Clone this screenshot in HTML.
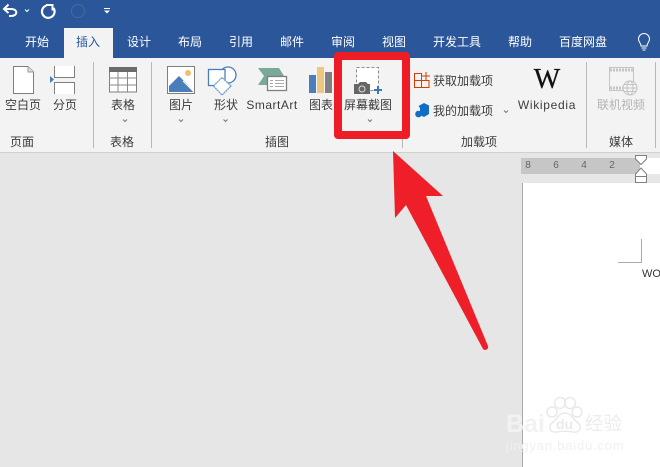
<!DOCTYPE html>
<html><head><meta charset="utf-8">
<style>
html,body{margin:0;padding:0}
body{width:660px;height:467px;overflow:hidden;position:relative;background:#e6e6e6;font-family:"Liberation Sans","Noto Sans CJK SC",sans-serif;font-size:12px;color:#3c3c3c}
.a{position:absolute}
.t{position:absolute;white-space:nowrap;line-height:16px;height:16px;transform:translateX(-50%)}
.tab{color:#fff;top:34px}
.sep{position:absolute;width:1px;background:#b8b8b8;top:62px;height:86px}
.c{position:absolute;color:#666;font-size:10px;line-height:10px;transform:translateX(-50%)}
svg{position:absolute;overflow:visible}
</style></head><body>
<div class="a" style="left:0;top:0;width:660px;height:58px;background:#2b579a"></div>
<div class="a" style="left:64px;top:28px;width:49px;height:30px;background:#f3f3f3"></div>
<div class="a" style="left:0;top:58px;width:660px;height:94px;background:#f3f3f3"></div>
<div class="a" style="left:0;top:152px;width:660px;height:1px;background:#d0d0d0"></div>

<!-- QAT -->
<svg style="left:0;top:0" width="120" height="24" fill="none">
<path d="M4 9 H11.500 C18 9 18 16 11 16 H9" stroke="#fff" stroke-width="2"/><path d="M8.500 4.500 L4 9 L8.500 13" stroke="#fff" stroke-width="2"/>
<path d="M25 9.500 l2 2 l2 -2" stroke="#fff" stroke-width="1"/>
<path d="M46.500 5.500 A6.300 6.300 0 1 0 53.500 8" stroke="#fff" stroke-width="2.200"/><path d="M46 5 H52.500 V10.500" stroke="#fff" stroke-width="2"/>
<circle cx="78" cy="11" r="6.500" stroke="#47699f" stroke-width="1"/>
<path d="M104 8.500 h6" stroke="#fff" stroke-width="1"/><path d="M104 10.500 h6 l-3 3 z" fill="#fff"/>
</svg>

<!-- Tabs -->
<div class="t tab" style="left:37px">开始</div>
<div class="t" style="left:88px;top:34px;color:#2b579a">插入</div>
<div class="t tab" style="left:139px">设计</div>
<div class="t tab" style="left:190px">布局</div>
<div class="t tab" style="left:241px">引用</div>
<div class="t tab" style="left:292px">邮件</div>
<div class="t tab" style="left:343px">审阅</div>
<div class="t tab" style="left:394px">视图</div>
<div class="t tab" style="left:457px">开发工具</div>
<div class="t tab" style="left:520px">帮助</div>
<div class="t tab" style="left:583px">百度网盘</div>
<svg style="left:636px;top:33px" width="16" height="20" fill="none" stroke="#fff" stroke-width="1"><path d="M5 13 C5 10 2.500 9 2.500 6 A5.500 5.500 0 0 1 13.500 6 C13.500 9 11 10 11 13 Z"/><path d="M5.500 15 h5 M6.500 17 h3"/></svg>

<!-- Separators -->
<div class="sep" style="left:93px"></div>
<div class="sep" style="left:151px"></div>
<div class="sep" style="left:402px"></div>
<div class="sep" style="left:586px"></div>
<div class="sep" style="left:655px"></div>

<!-- 空白页 -->
<svg style="left:0;top:60px" width="150" height="40" fill="none">
<path d="M13.500 6.500 H28 L33.500 12 V33.500 H13.500 Z" fill="#fff" stroke="#7f7f7f"/><path d="M28 6.500 V12 H33.500" stroke="#9a9a9a" fill="#e0e0e0"/>
<rect x="54" y="6" width="21" height="11" fill="#fff"/><rect x="54" y="22" width="21" height="12" fill="#fff"/>
<path d="M54.500 6 V17.500 H74.500 V6 M54.500 34 V22.500 H74.500 V34" stroke="#7f7f7f"/>
<path d="M50 16 L54 19.500 L50 23 Z" fill="#4a7ebb"/>
<rect x="109.500" y="7.500" width="27" height="24.500" fill="#fff" stroke="#7f7f7f"/><rect x="109" y="7" width="28" height="5" fill="#6b6b6b"/>
<path d="M109 18 H137 M109 25 H137 M118 12 V32 M127.500 12 V32" stroke="#8a8a8a"/>
</svg>
<div class="t" style="left:23px;top:97px">空白页</div>
<div class="t" style="left:65px;top:97px">分页</div>
<div class="t" style="left:123px;top:97px">表格</div>
<div class="t" style="left:22px;top:134px">页面</div>
<div class="t" style="left:122px;top:134px">表格</div>
<svg style="left:0;top:119px" width="400" height="6" fill="none" stroke="#777"><path d="M123 .5 l2 2 l2 -2 M179 .5 l2 2 l2 -2 M223.500 .5 l2 2 l2 -2 M368 .5 l2 2 l2 -2"/></svg>

<!-- 图片, 形状, SmartArt, 图表 -->
<svg style="left:0;top:0" width="340" height="100" fill="none">
<rect x="167.500" y="66.500" width="27" height="27" fill="#fff" stroke="#7f7f7f"/>
<circle cx="188" cy="73" r="3" fill="#eebf6f"/>
<path d="M169 92 V86 L179 76 L189 86 L193 92 Z" fill="#4a7ebb"/><path d="M183 81 L193 91" stroke="#fff"/>
<circle cx="228" cy="75" r="8" fill="#fff" stroke="#4a7ebb" stroke-width="1.300"/>
<rect x="208.500" y="69.500" width="16.500" height="16" fill="#fff" stroke="#4a7ebb" stroke-width="1.300"/>
<path d="M213.500 86 L222 77.500 L231 86 L222 95 Z" fill="#fff" stroke="#6e9bd1" stroke-width="1.300" stroke-dasharray="2 .5"/>
<path d="M258 68 H279 L284 76 L280 83 H267 V85 H258 L264 76 Z" fill="#7aa997"/>
<rect x="267.500" y="76.500" width="19" height="14" fill="#fff" stroke="#7f7f7f" stroke-width="1.300"/>
<path d="M270 80.500 h3 M275 80.500 h9 M270 83.500 h3 M275 83.500 h9 M270 86.500 h3 M275 86.500 h9" stroke="#aaa"/>
<rect x="309" y="75" width="7" height="18" fill="#4a7ebb"/>
<rect x="317" y="67" width="7" height="26" fill="#eec77c"/>
<rect x="325" y="72" width="7" height="21" fill="#808080"/>
</svg>
<div class="t" style="left:181px;top:97px">图片</div>
<div class="t" style="left:226px;top:97px">形状</div>
<div class="t" style="left:272px;top:97px;letter-spacing:.5px">SmartArt</div>
<div class="t" style="left:321px;top:97px">图表</div>
<div class="t" style="left:277px;top:134px">插图</div>

<!-- 屏幕截图 -->
<svg style="left:350px;top:62px" width="50" height="36" fill="none">
<rect x="6.500" y="5.500" width="22" height="23" fill="#fff" stroke="#8a8a8a" stroke-dasharray="3 2"/>
<path d="M4 22 H8 L10 20 H16 L18 22 H20 V32 H4 Z" fill="#666"/><circle cx="12" cy="27" r="3" fill="#666" stroke="#ddd"/>
<path d="M28 24 V32 M24 28 H32" stroke="#3f77b5" stroke-width="2"/>
</svg>
<div class="t" style="left:368px;top:97px">屏幕截图</div>

<!-- 加载项 -->
<svg style="left:0;top:0" width="440" height="125" fill="none">
<path d="M414.500 73.500 H421.500 V87.500 H414.500 Z M414.500 80.500 H429 V87.500 H421.500" stroke="#d83b01"/>
<path d="M426 72 V80 M422 76 H430" stroke="#d83b01"/>
<path d="M418.500 106 L424 103 L429 105.500 L429 114 L424 117 L420 115 V108 Z" fill="#0f6fc6"/><circle cx="418.500" cy="114" r="3.300" fill="#0f6fc6"/>
</svg>
<div class="t" style="left:463px;top:73px">获取加载项</div>
<div class="t" style="left:463px;top:103px">我的加载项</div>
<svg style="left:503px;top:110px" width="8" height="5" fill="none" stroke="#777"><path d="M1 .5 l2 2 l2 -2"/></svg>
<div class="a" style="left:532px;top:65px;font-family:'Liberation Serif',serif;font-size:28px;line-height:30px;color:#111;width:30px;text-align:center;-webkit-text-stroke:.3px #111">W</div>
<div class="t" style="left:547px;top:97px;letter-spacing:.7px">Wikipedia</div>
<div class="t" style="left:479px;top:134px">加载项</div>

<!-- 媒体 -->
<svg style="left:605px;top:66px" width="44" height="32" fill="none">
<rect x="4.500" y="1.500" width="24" height="23" fill="#f5f3f6" stroke="#c4c4c4"/>
<path d="M5 4 H28 M5 22 H28" stroke="#c4c4c4" stroke-width="3" stroke-dasharray="2 1"/>
<circle cx="25" cy="22" r="7" fill="#f3f3f3" stroke="#c4c4c4"/><ellipse cx="25" cy="22" rx="3" ry="7" stroke="#c4c4c4"/><path d="M18 22 H32 M19 18.500 H31 M19 25.500 H31" stroke="#c4c4c4"/>
</svg>
<div class="t" style="left:621px;top:97px;color:#b4b4b4">联机视频</div>
<div class="t" style="left:621px;top:134px">媒体</div>

<!-- Ruler and page -->
<div class="a" style="left:521px;top:158px;width:119px;height:16px;background:#c6c6c6"></div>
<div class="a" style="left:640px;top:158px;width:20px;height:16px;background:#fff"></div>
<div class="c" style="left:528px;top:161px">8</div>
<div class="c" style="left:556px;top:161px">6</div>
<div class="c" style="left:584px;top:161px">4</div>
<div class="c" style="left:612px;top:161px">2</div>
<svg style="left:634px;top:155px" width="14" height="28" fill="none" stroke="#808080"><path d="M1.500 .5 H12.500 V4 L7 9.500 L1.500 4 Z" fill="#fff"/><path d="M7 13 L1.500 19 V27.500 H12.500 V19 Z" fill="#fff"/><path d="M1.500 21.500 H12.500"/></svg>
<div class="a" style="left:522px;top:183px;width:138px;height:284px;background:#fff;border-left:1px solid #a8a8a8;box-sizing:border-box"></div>
<div class="a" style="left:618px;top:239px;width:23px;height:23px;border-right:1px solid #aaa;border-bottom:1px solid #aaa"></div>
<div class="a" style="left:642px;top:268px;font-size:11px;line-height:13px;color:#333">WO</div>

<!-- Watermark -->
<div class="a" style="left:506px;top:410px;font-size:25px;line-height:28px;font-weight:bold;color:#f2f2f2;white-space:nowrap">Bai</div>
<svg style="left:545px;top:400px" width="40" height="36" fill="none" stroke="#e9e9e9" stroke-width="1.500"><circle cx="7" cy="12" r="5"/><circle cx="15" cy="3" r="5.500"/><circle cx="25" cy="3" r="5.500"/><circle cx="32" cy="12" r="5"/><path d="M20 13 C14 13 12 19 8 22 C2 27 5 33 12 32 C16 31 24 31 28 32 C35 33 38 27 32 22 C28 19 26 13 20 13 Z"/></svg>
<div class="a" style="left:556px;top:417px;font-size:14px;line-height:15px;font-weight:bold;color:#e9e9e9">du</div>
<div class="a" style="left:585px;top:413px;font-size:18.500px;line-height:22px;color:#ececec;white-space:nowrap">经验</div>
<div class="a" style="left:506px;top:439px;font-size:13px;line-height:14px;color:#f0f0f0;letter-spacing:.8px;white-space:nowrap">jingyan.baidu.com</div>

<!-- Red annotations -->
<div class="a" style="left:334px;top:52px;width:76px;height:87px;box-sizing:border-box;border:8px solid #ee1c25;border-radius:4px"></div>
<svg style="left:0;top:0" width="660" height="467"><path d="M393 151 L443 196 L426 196 L488 346 A3 3 0 0 1 483 349 L406 205 L395 218 Z" fill="#ee1f28"/></svg>
</body></html>
